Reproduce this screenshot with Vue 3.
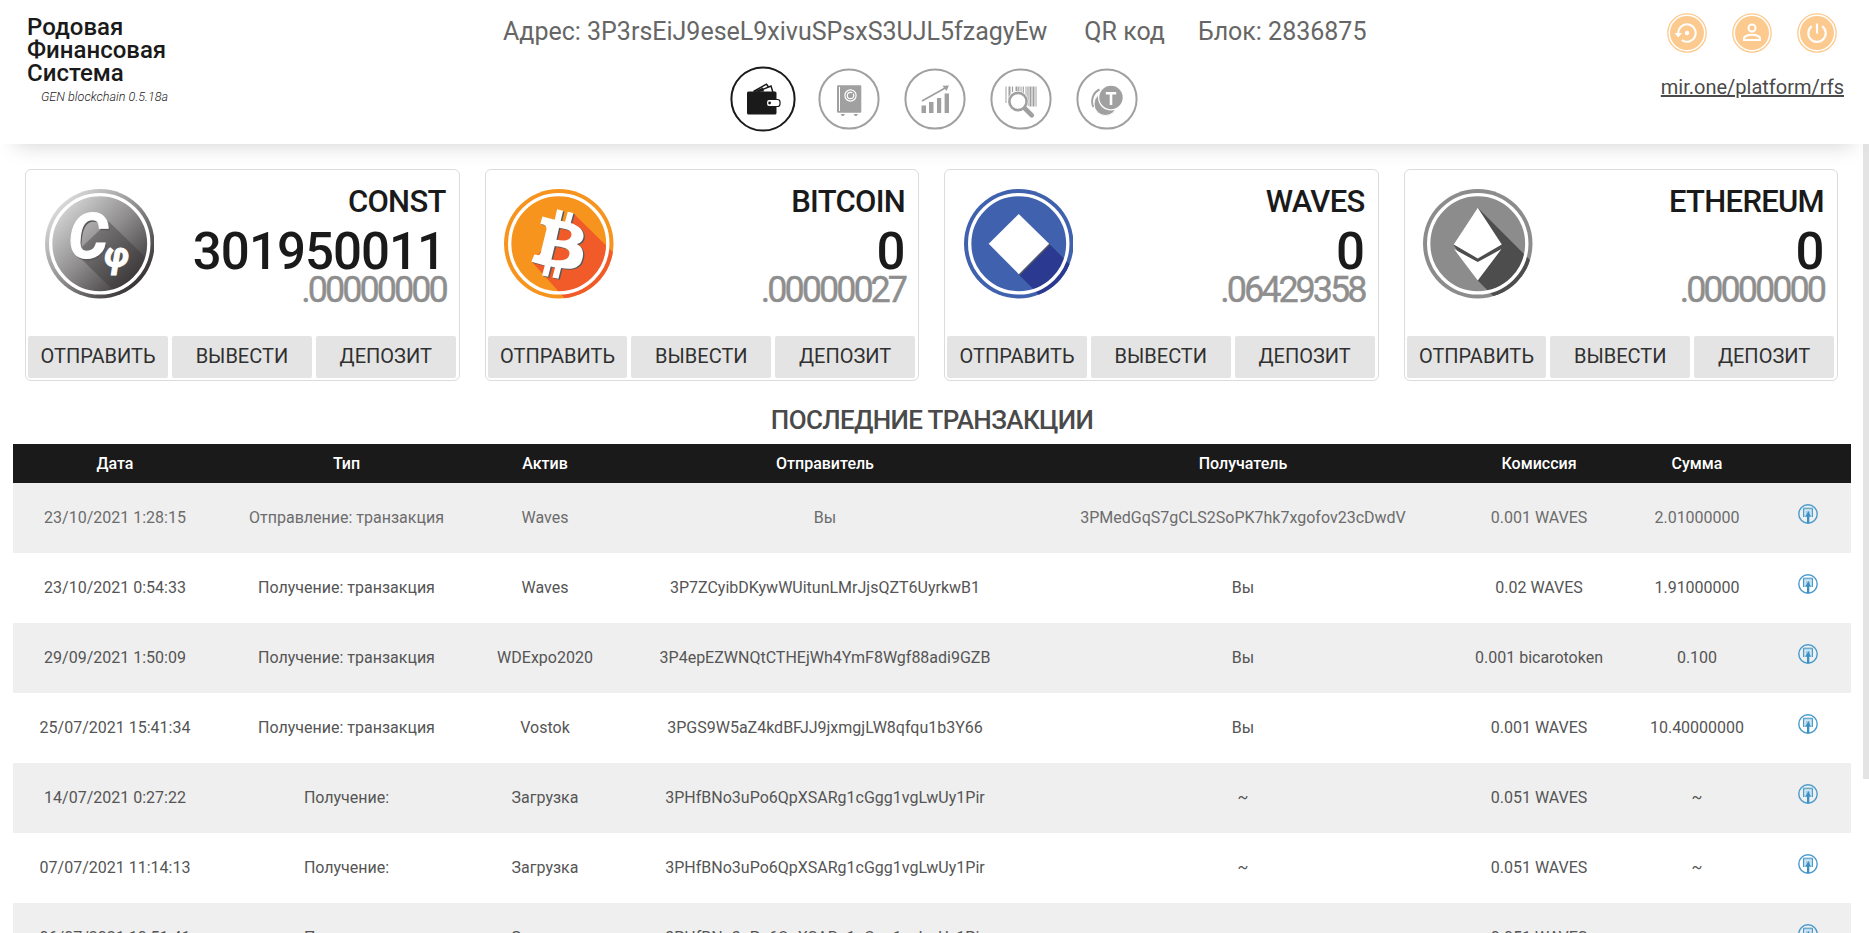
<script setup>
const cards = [
  { id: 'const', name: 'CONST', whole: '301950011', frac: '.00000000' },
  { id: 'btc', name: 'BITCOIN', whole: '0', frac: '.00000027' },
  { id: 'waves', name: 'WAVES', whole: '0', frac: '.06429358' },
  { id: 'eth', name: 'ETHEREUM', whole: '0', frac: '.00000000' },
]
const actions = ['ОТПРАВИТЬ', 'ВЫВЕСТИ', 'ДЕПОЗИТ']
const columns = ['Дата', 'Тип', 'Актив', 'Отправитель', 'Получатель', 'Комиссия', 'Сумма', '']
const loader = '3PHfBNo3uPo6QpXSARg1cGgg1vgLwUy1Pir'
const rows = [
  ['23/10/2021 1:28:15', 'Отправление: транзакция', 'Waves', 'Вы', '3PMedGqS7gCLS2SoPK7hk7xgofov23cDwdV', '0.001 WAVES', '2.01000000'],
  ['23/10/2021 0:54:33', 'Получение: транзакция', 'Waves', '3P7ZCyibDKywWUitunLMrJjsQZT6UyrkwB1', 'Вы', '0.02 WAVES', '1.91000000'],
  ['29/09/2021 1:50:09', 'Получение: транзакция', 'WDExpo2020', '3P4epEZWNQtCTHEjWh4YmF8Wgf88adi9GZB', 'Вы', '0.001 bicarotoken', '0.100'],
  ['25/07/2021 15:41:34', 'Получение: транзакция', 'Vostok', '3PGS9W5aZ4kdBFJJ9jxmgjLW8qfqu1b3Y66', 'Вы', '0.001 WAVES', '10.40000000'],
  ['14/07/2021 0:27:22', 'Получение:', 'Загрузка', loader, '~', '0.051 WAVES', '~'],
  ['07/07/2021 11:14:13', 'Получение:', 'Загрузка', loader, '~', '0.051 WAVES', '~'],
  ['06/07/2021 10:51:41', 'Получение:', 'Загрузка', loader, '~', '0.051 WAVES', '~'],
]
</script>

<template>
  <div class="page">
    <header class="top">
      <div class="brand">
        <div class="brand-name">Родовая<br>Финансовая<br>Система</div>
        <div class="brand-ver">GEN blockchain 0.5.18a</div>
      </div>

      <div class="middle">
        <div class="info">
          <span class="addr">Адрес: 3P3rsEiJ9eseL9xivuSPsxS3UJL5fzagyEw</span>
          <span class="qr">QR код</span>
          <span class="block">Блок: 2836875</span>
        </div>
        <nav class="nav">
          <svg class="nav-on" viewBox="0 0 66 66">
            <circle cx="33" cy="33" r="31.6" fill="none" stroke="#1a1a1a" stroke-width="2" />
            <path d="M23.500 25.500 36.500 18.200 38.500 21 M28 25.500 41 20 43 26.500" fill="none" stroke="#1a1a1a" stroke-width="1.500" />
            <path d="M23 26 33 21.500 34 25.500Z" fill="#1a1a1a" />
            <rect x="17" y="25.500" width="29.500" height="23" rx="1.500" fill="#1a1a1a" />
            <rect x="36.500" y="33.500" width="13.500" height="7" rx="2.500" fill="#fff" stroke="#1a1a1a" stroke-width="1.200" />
            <circle cx="39.600" cy="37" r="1.400" fill="#1a1a1a" />
          </svg>
          <svg viewBox="0 0 62 62">
            <circle cx="31" cy="31" r="29.600" fill="none" stroke="#a0a0a0" stroke-width="2" />
            <rect x="19" y="17.200" width="24.300" height="27.600" rx="1.200" fill="#a0a0a0" />
            <path d="M21.500 19V43" stroke="#fff" stroke-width="1" />
            <circle cx="32.500" cy="27.500" r="5.600" fill="none" stroke="#fff" stroke-width="1.200" />
            <circle cx="32.500" cy="27.500" r="3.200" fill="none" stroke="#fff" stroke-width="1.200" />
            <path d="M32.500 27.500 36 24" stroke="#a0a0a0" stroke-width="1.200" />
            <path d="M22.500 46H27L25.500 48H24ZM35.500 46H40L38.500 48H37Z" fill="#a0a0a0" />
          </svg>
          <svg viewBox="0 0 62 62">
            <circle cx="31" cy="31" r="29.600" fill="none" stroke="#a0a0a0" stroke-width="2" />
            <path d="M17.500 37.500H22V45H17.500ZM25 34H29.500V45H25ZM33 30H37.200V45H33ZM40.600 25.500H45V45H40.600Z" fill="#a0a0a0" />
            <path d="M18 33 42 19.500" stroke="#a0a0a0" stroke-width="1.800" />
            <path d="M38.500 17.800 45 17.500 42.500 23Z" fill="#a0a0a0" />
          </svg>
          <svg viewBox="0 0 62 62">
            <circle cx="31" cy="31" r="29.600" fill="none" stroke="#a0a0a0" stroke-width="2" />
            <path d="M16 18.500V35M31 18.500V24M36 18.500V36M46 18.500V38.500" stroke="#a0a0a0" stroke-width="1" />
            <path d="M19.500 18.500V37M26.500 18.500V23M40.500 18.500V38.500M43.500 18.500V38.500" stroke="#a0a0a0" stroke-width="2" />
            <path d="M22.500 18.500V24M28.800 18.500V23M33.300 18.500V25M38 18.500V38" stroke="#a0a0a0" stroke-width="1.200" />
            <circle cx="28" cy="33.500" r="10.500" fill="#fff" />
            <path d="M34.500 40 42 47.500" stroke="#fff" stroke-width="6.500" />
            <circle cx="28" cy="33.500" r="8.600" fill="#fff" stroke="#a0a0a0" stroke-width="2.600" />
            <path d="M35 40.500 41.800 47.300" stroke="#a0a0a0" stroke-width="4.600" stroke-linecap="round" />
          </svg>
          <svg viewBox="0 0 62 62">
            <circle cx="31" cy="31" r="29.600" fill="none" stroke="#a0a0a0" stroke-width="2" />
            <path d="M23.500 21.500A13 13 0 0 0 17.500 39" fill="none" stroke="#a0a0a0" stroke-width="2" />
            <circle cx="29.500" cy="36" r="11.500" fill="#a0a0a0" stroke="#fff" stroke-width="1" />
            <circle cx="35" cy="29.500" r="13" fill="#fff" />
            <circle cx="35" cy="29.500" r="11.700" fill="#a0a0a0" />
            <path d="M29.800 25.300H40.200M35 25.300V37" stroke="#fff" stroke-width="2.600" />
          </svg>
        </nav>
      </div>

      <div class="right">
        <div class="tools">
          <svg viewBox="0 0 40 40">
            <circle cx="20" cy="20" r="19.200" fill="none" stroke="#fcca8e" stroke-width="1.300" />
            <circle cx="20" cy="20" r="17" fill="#fcca8e" />
            <path d="M11.300 20A8.700 8.700 0 1 1 14.800 27" fill="none" stroke="#fff" stroke-width="2" />
            <path d="M7.500 20H15L11.300 24.500Z" fill="#fff" />
            <circle cx="20" cy="20" r="2.200" fill="#fff" />
          </svg>
          <svg viewBox="0 0 40 40">
            <circle cx="20" cy="20" r="19.200" fill="none" stroke="#fcca8e" stroke-width="1.300" />
            <circle cx="20" cy="20" r="17" fill="#fcca8e" />
            <circle cx="20" cy="15" r="3.500" fill="none" stroke="#fff" stroke-width="2" />
            <path d="M12 27V25.500C12 23 16.500 21.800 20 21.800S28 23 28 25.500V27Z" fill="none" stroke="#fff" stroke-width="2" />
          </svg>
          <svg viewBox="0 0 40 40">
            <circle cx="20" cy="20" r="19.200" fill="none" stroke="#fcca8e" stroke-width="1.300" />
            <circle cx="20" cy="20" r="17" fill="#fcca8e" />
            <path d="M20 10.500V20.500M14.800 13.200A8.700 8.700 0 1 0 25.200 13.200" fill="none" stroke="#fff" stroke-width="2.100" />
          </svg>
        </div>
        <a class="link">mir.one/platform/rfs</a>
      </div>
    </header>

    <main class="body">
      <section class="cards">
        <article v-for="c in cards" :key="c.id" class="card">
          <div class="card-main">
            <svg v-if="c.id === 'const'" class="coin" viewBox="134 86 328 328">
              <defs>
                <linearGradient id="gOuter" x1="0.1" y1="0.1" x2="0.9" y2="0.9">
                  <stop offset="0" stop-color="#e2e2e2" /><stop offset="0.5" stop-color="#8e8c8d" /><stop offset="1" stop-color="#2d292a" />
                </linearGradient>
                <linearGradient id="gShade" x1="0.15" y1="0.1" x2="0.75" y2="0.75">
                  <stop offset="0" stop-color="#7d7b7c" /><stop offset="1" stop-color="#353132" />
                </linearGradient>
                <clipPath id="cpConst"><circle cx="298" cy="250" r="143" /></clipPath>
              </defs>
              <circle cx="298" cy="250" r="164" fill="url(#gOuter)" />
              <path d="M325 183 470 325 400 450 225 278Z" fill="url(#gShade)" clip-path="url(#cpConst)" />
              <circle cx="298" cy="250" r="147" fill="none" stroke="#fff" stroke-width="10" />
              <g class="coin-letters">
                <g fill="#5a5859"><text x="208" y="298" font-size="188">C</text><text x="315" y="324" font-size="102">φ</text></g>
                <g fill="#fff" stroke="#fff" stroke-width="3"><text x="204" y="294" font-size="188">C</text><text x="312" y="321" font-size="102">φ</text></g>
              </g>
            </svg>
            <svg v-else-if="c.id === 'btc'" class="coin" viewBox="104 86 328 328">
              <defs><clipPath id="cpBtc"><circle cx="268" cy="250" r="164" /></clipPath></defs>
              <circle cx="268" cy="250" r="164" fill="#f7941e" />
              <path d="M313 160 187 304 292 420 450 400 445 290Z" fill="#f15a29" clip-path="url(#cpBtc)" />
              <circle cx="268" cy="250" r="147" fill="none" stroke="#fff" stroke-width="10" />
              <g fill-rule="evenodd">
                <path v-for="s in [4, 0]" :key="s" :fill="s ? '#58595b' : '#fff'" :transform="`translate(${s} ${s * 0.7})`" d="M219 168 256 178 263 147 281 151 274 181 287 184 295 154 312 158 304 188C330 197 344 211 342 229C340 243 331 249 322 251C339 260 344 275 339 294C333 321 312 329 275 323L267 355 249 351 257 321 244 318 236 349 218 345 226 315 186 304 195 282 204 284Q212 285 214 277L231 207Q233 196 223 193L213 190ZM269 202 261 238C285 243 303 241 306 224C308 208 291 206 269 202ZM256 257 246 297C275 303 298 300 300 280C302 264 280 260 256 257Z" />
              </g>
            </svg>
            <svg v-else-if="c.id === 'waves'" class="coin" viewBox="103 86 328 328">
              <defs><clipPath id="cpWav"><circle cx="267" cy="250" r="164" /></clipPath></defs>
              <circle cx="267" cy="250" r="164" fill="#4062ae" />
              <path d="M358 250 267 342 350 425 450 425 450 342Z" fill="#2b3990" clip-path="url(#cpWav)" />
              <circle cx="267" cy="250" r="147" fill="none" stroke="#fff" stroke-width="10" />
              <path d="M360 251 269 343" stroke="#58595b" stroke-width="4" />
              <path d="M267 161 358 250 267 341 177 250Z" fill="#fff" />
            </svg>
            <svg v-else class="coin" viewBox="101 86 328 328">
              <defs><clipPath id="cpEth"><circle cx="265" cy="250" r="164" /></clipPath></defs>
              <circle cx="265" cy="250" r="164" fill="#8c8c8c" />
              <path d="M265 142 193 254 265 360 330 425 450 425 450 327Z" fill="#4d4d4d" clip-path="url(#cpEth)" />
              <circle cx="265" cy="250" r="147" fill="none" stroke="#fff" stroke-width="10" />
              <path d="M265 142 337 252 265 294 193 252ZM194 266 265 305 336 266 265 360Z" fill="#fff" />
            </svg>
            <div class="amounts">
              <div class="name">{{ c.name }}</div>
              <div class="whole">{{ c.whole }}</div>
              <div class="frac">{{ c.frac }}</div>
            </div>
          </div>
          <div class="actions">
            <button v-for="a in actions" :key="a" class="act">{{ a }}</button>
          </div>
        </article>
      </section>

      <h2 class="heading">ПОСЛЕДНИЕ ТРАНЗАКЦИИ</h2>

      <section class="table">
        <div class="tr th">
          <span v-for="(h, i) in columns" :key="i">{{ h }}</span>
        </div>
        <div v-for="(r, i) in rows" :key="i" class="tr td" :class="{ faded: i === 0 }">
          <span v-for="(v, j) in r" :key="j">{{ v }}</span>
          <span class="ico">
            <svg viewBox="0 0 20 20">
              <circle cx="10" cy="10" r="9.200" fill="none" stroke="#4a9acb" stroke-width="1.400" />
              <path d="M5.500 13V4.200H14.500V13" fill="#a5cee6" stroke="#4a9ccc" stroke-width="1" />
              <path d="M7.200 11V6.200H12.800V11" fill="none" stroke="#e9f4fa" stroke-width="0.900" />
              <path d="M10.500 7 7.200 13 9 12.500V19H11.300V12.500L12.800 13Z" fill="#3a90c5" />
            </svg>
          </span>
        </div>
      </section>
    </main>
    <div class="scroll"></div>
  </div>
</template>

<style>
html, body { margin: 0; background: #fff; overflow: hidden; }
</style>

<style scoped>
.page {
  position: relative;
  width: 1869px;
  height: 933px;
  overflow: hidden;
  background: #fff;
  font-family: Roboto, "Noto Sans", sans-serif;
  font-weight: 400;
  color: #555;
}
.top {
  position: relative;
  z-index: 1;
  box-sizing: border-box;
  height: 144px;
  background: #fff;
  box-shadow: 0 17px 20px -16px rgba(0, 0, 0, 0.18);
  display: grid;
  grid-template-columns: 503px 1fr 240px;
}
.brand { padding: 16px 0 0 27px; }
.brand-name { font-weight: 500; font-size: 24px; line-height: 23.2px; color: #1a1a1a; }
.brand-ver { margin: 3px 0 0 14px; font-size: 12.600px; line-height: 15px; font-style: italic; font-weight: 300; color: #222; }
.info {
  display: flex;
  padding-top: 17px;
  font-size: 25px;
  line-height: 30px;
  white-space: nowrap;
  color: #666;
}
.qr { margin-left: 37px; }
.block { margin-left: 33px; }
.nav { display: flex; align-items: center; gap: 24px; margin: 19.300px 0 0 226.700px; }
.nav svg { width: 62px; height: 62px; flex: none; }
.nav svg.nav-on { width: 66px; height: 66px; margin-right: -2px; }
.right { display: flex; flex-direction: column; align-items: flex-end; }
.tools { display: flex; gap: 25px; padding: 13px 32px 0 0; }
.tools svg { width: 40px; height: 40px; }
.link { margin: 22px 25px 0 0; font-size: 20px; line-height: 24px; text-decoration: underline; color: #4a4a4a; }

.body { padding: 25px 18px 0 13px; }
.cards { display: grid; grid-template-columns: repeat(4, 1fr); gap: 25px; padding: 0 13px 0 12.200px; }
.card {
  box-sizing: border-box;
  height: 212px;
  border: 1px solid #dcdcdc;
  border-radius: 6px;
  padding: 0 3px 2px 2px;
  display: flex;
  flex-direction: column;
  justify-content: space-between;
}
.card-main { display: flex; justify-content: space-between; padding: 19px 10px 0 16.800px; }
.coin { width: 109.500px; height: 109.500px; flex: none; }
.coin-letters { font-family: Roboto, sans-serif; font-weight: 700; font-style: italic; }
.amounts { text-align: right; color: #1a1a1a; font-weight: 500; }
.name { font-size: 31px; line-height: 26px; letter-spacing: -0.7px; }
.whole { font-size: 51px; line-height: 54px; margin-top: 10px; letter-spacing: -0.95px; margin-right: 0.500px; }
.frac {
  font-size: 36px;
  line-height: 30px;
  margin-top: -4px;
  letter-spacing: -3px;
  margin-right: 0;
  color: #8e8e8e;
  font-weight: 400;
  -webkit-text-stroke: 0.4px #8e8e8e;
}
.actions { display: grid; grid-template-columns: repeat(3, 1fr); gap: 4px; }
.act {
  height: 42px;
  border: 0;
  border-radius: 2px;
  background: #e4e4e4;
  color: #303030;
  font: 400 20px/40px Roboto, sans-serif;
  padding: 0 0 2px;
}
.heading {
  margin: 23px 0 0;
  height: 40px;
  line-height: 32px;
  text-align: center;
  font-size: 26px;
  font-weight: 500;
  letter-spacing: -0.65px;
  color: #4a4a4a;
}
.tr { display: grid; grid-template-columns: 204px 259px 138px 422px 414px 178px 138px 85px; text-align: center; font-size: 16px; }
.tr span { white-space: nowrap; }
.th { height: 39px; line-height: 39px; background: #1a1a1a; color: #fff; font-weight: 500; }
.td { height: 70px; line-height: 70px; }
.td:nth-child(even) { background: #efefef; }
.faded { color: #6c6c6c; }
.ico { display: flex; justify-content: center; padding: 21px 2px 0 0; }
.ico svg { width: 20px; height: 20px; }
.scroll { position: absolute; right: 0; top: 144px; width: 6px; height: 635px; background: #e4e4e4; }
</style>
